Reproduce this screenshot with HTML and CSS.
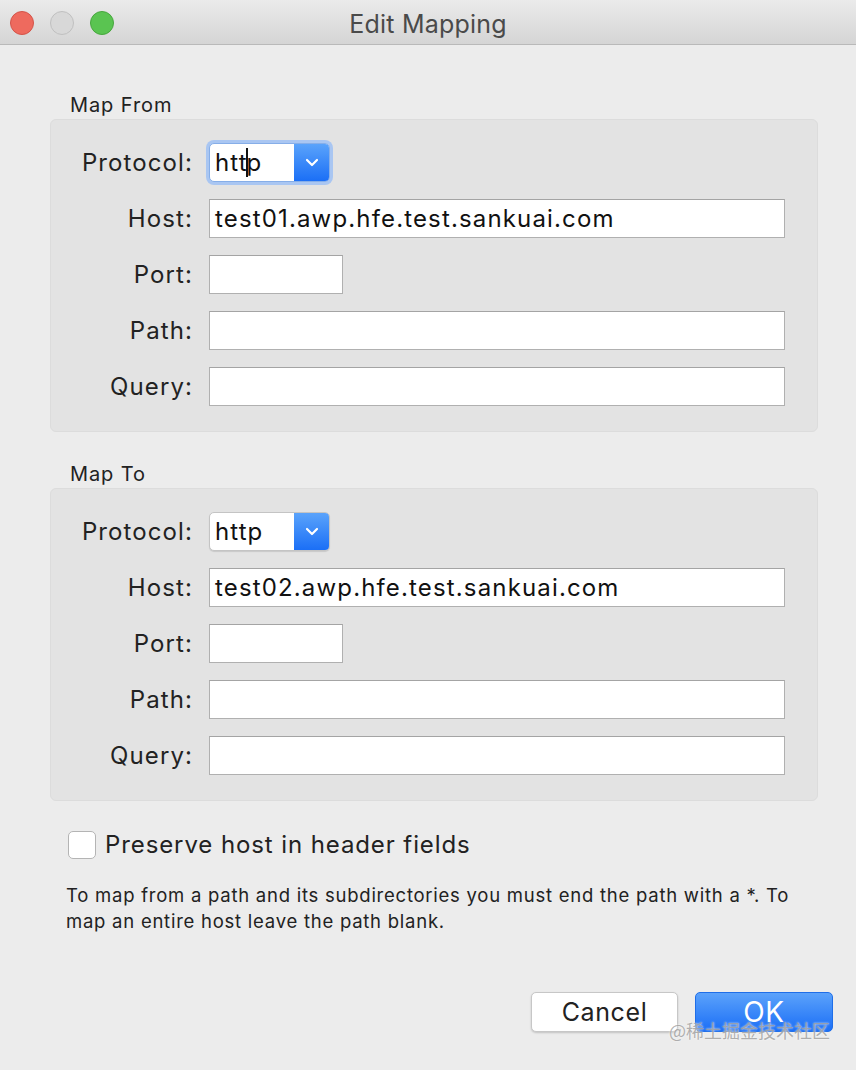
FILE: index.html
```html
<!DOCTYPE html>
<html>
<head>
<meta charset="utf-8">
<link rel="stylesheet" href="styles.css">
</head>
<body>
<div class="window">
  <div class="titlebar">
    <div class="lights">
      <span class="light red"></span>
      <span class="light gray"></span>
      <span class="light green"></span>
    </div>
    <div class="title">Edit Mapping</div>
  </div>
  <div class="content">
    <div class="section-label">Map From</div>
    <div class="group">
      <div class="label">Protocol:</div>
      <div class="field-wrap"><div class="popup focused"><span class="popup-text">htt<span class="caret"></span>p</span><span class="popup-arrow"><svg width="14" height="9" viewBox="0 0 14 9"><path d="M2 2 L7 7 L12 2" fill="none" stroke="#fff" stroke-width="2.2" stroke-linecap="round" stroke-linejoin="round"/></svg></span></div></div>
      <div class="label">Host:</div>
      <div class="field-wrap"><div class="input wide">test01.awp.hfe.test.sankuai.com</div></div>
      <div class="label">Port:</div>
      <div class="field-wrap"><div class="input short"></div></div>
      <div class="label">Path:</div>
      <div class="field-wrap"><div class="input wide"></div></div>
      <div class="label">Query:</div>
      <div class="field-wrap"><div class="input wide"></div></div>
    </div>
    <div class="section-label second">Map To</div>
    <div class="group">
      <div class="label">Protocol:</div>
      <div class="field-wrap"><div class="popup"><span class="popup-text">http</span><span class="popup-arrow"><svg width="14" height="9" viewBox="0 0 14 9"><path d="M2 2 L7 7 L12 2" fill="none" stroke="#fff" stroke-width="2.2" stroke-linecap="round" stroke-linejoin="round"/></svg></span></div></div>
      <div class="label">Host:</div>
      <div class="field-wrap"><div class="input wide">test02.awp.hfe.test.sankuai.com</div></div>
      <div class="label">Port:</div>
      <div class="field-wrap"><div class="input short"></div></div>
      <div class="label">Path:</div>
      <div class="field-wrap"><div class="input wide"></div></div>
      <div class="label">Query:</div>
      <div class="field-wrap"><div class="input wide"></div></div>
    </div>
    <div class="check-row">
      <span class="checkbox"></span>
      <span class="check-label">Preserve host in header fields</span>
    </div>
    <p class="help">To map from a path and its subdirectories you must end the path with a *. To map an entire host leave the path blank.</p>
    <div class="buttons">
      <div class="btn cancel">Cancel</div>
      <div class="btn ok">OK</div>
      <div class="watermark">@稀土掘金技术社区</div>
    </div>
  </div>
</div>
</body>
</html>
```
FILE: styles.css
```css
html, body {
  margin: 0;
  padding: 0;
}
body {
  width: 856px;
  height: 1070px;
  background: #ececec;
  font-family: Inter, "Noto Sans", sans-serif;
  color: #222;
  overflow: hidden;
}
.window {
  width: 856px;
  height: 1070px;
  background: #ececec;
}
.titlebar {
  height: 45px;
  background: linear-gradient(#ebebeb, #d5d5d5);
  border-bottom: 1px solid #b9b9b9;
  display: flex;
  align-items: center;
  position: relative;
  box-sizing: border-box;
}
.lights {
  display: flex;
  gap: 16px;
  padding-left: 10px;
  margin-top: 2px;
}
.light {
  width: 24px;
  height: 24px;
  border-radius: 50%;
  box-sizing: border-box;
}
.light.red { background: #ee6a5e; border: 1px solid #d45449; }
.light.gray { background: #d8d8d8; border: 1px solid #c0c0c0; }
.light.green { background: #5ac451; border: 1px solid #47a73e; }
.title {
  position: absolute;
  left: 0;
  right: 0;
  top: 3px;
  bottom: 0;
  display: flex;
  align-items: center;
  justify-content: center;
  font-size: 25px;
  letter-spacing: 0.2px;
  color: #4a4a4a;
}
.content {
  padding: 47px 23px 0 50px;
}
.section-label {
  font-size: 20px;
  letter-spacing: 0.9px;
  color: #222;
  padding-left: 20px;
  height: 27px;
  line-height: 27px;
}
.section-label.second {
  margin-top: 29px;
}
.group {
  background: #e3e3e3;
  border: 1px solid #dcdcdc;
  border-radius: 6px;
  display: grid;
  grid-template-columns: 142px 1fr;
  column-gap: 16px;
  row-gap: 17px;
  padding: 23px 32px 25px 0;
  margin-right: 15px;
}
.label {
  text-align: right;
  font-size: 24px;
  letter-spacing: 1.1px;
  line-height: 39px;
  height: 39px;
}
.field-wrap {
  display: flex;
  align-items: center;
}
.input {
  height: 39px;
  box-sizing: border-box;
  background: #fff;
  border: 1px solid #b0b0b0;
  border-top-color: #a4a4a4;
  font-size: 24px;
  letter-spacing: 1.15px;
  line-height: 37px;
  padding-left: 5px;
  color: #111;
  white-space: nowrap;
}
.input.wide { width: 576px; }
.input.short { width: 134px; }
.popup {
  width: 121px;
  height: 39px;
  box-sizing: border-box;
  display: flex;
  border-radius: 5px;
  background: #fff;
  border: 1px solid #c4c4c4;
  box-shadow: 0 1px 1px rgba(0,0,0,0.12);
  overflow: hidden;
}
.popup.focused {
  box-shadow: 0 0 0 3px #a9c6f2;
  border-color: #86aee8;
}
.popup-text {
  flex: 1;
  font-size: 24px;
  letter-spacing: 1.1px;
  line-height: 37px;
  padding-left: 5px;
  color: #111;
  position: relative;
}
.caret {
  display: inline-block;
  width: 2px;
  height: 29px;
  background: #111;
  vertical-align: -6px;
  margin: 0 -1px 0 -2px;
}
.popup-arrow {
  width: 35px;
  background: linear-gradient(#5aa3fb, #1b6ff6);
  display: flex;
  align-items: center;
  justify-content: center;
}
.check-row {
  display: flex;
  align-items: center;
  margin-top: 29px;
  padding-left: 18px;
  gap: 9px;
}
.checkbox {
  width: 28px;
  height: 28px;
  box-sizing: border-box;
  background: #fff;
  border: 1px solid #b4b4b4;
  border-radius: 5px;
}
.check-label {
  font-size: 24px;
  letter-spacing: 0.9px;
  color: #222;
}
.help {
  margin: 23px 0 0 16px;
  width: 745px;
  font-size: 18.5px;
  letter-spacing: 0.75px;
  line-height: 26px;
  color: #222;
}
.buttons {
  display: flex;
  justify-content: flex-end;
  gap: 17px;
  margin-top: 58px;
  position: relative;
}
.btn {
  height: 40px;
  box-sizing: border-box;
  border-radius: 5px;
  font-size: 25px;
  letter-spacing: 0.6px;
  line-height: 38px;
  text-align: center;
}
.btn.cancel {
  width: 147px;
  background: #fff;
  border: 1px solid #c7c7c7;
  box-shadow: 0 1px 2px rgba(0,0,0,0.18);
  color: #222;
}
.btn.ok {
  width: 138px;
  background: linear-gradient(#5ba2fb, #1c6ff6);
  border: 1px solid #1f6ee8;
  color: #fff;
  font-size: 28px;
}
.watermark {
  position: absolute;
  right: 3px;
  top: 25px;
  font-size: 18px;
  color: rgba(150,150,150,0.75);
  text-shadow: 0 0 2px rgba(255,255,255,0.9);
  font-family: "Noto Sans CJK SC", sans-serif;
}
```
